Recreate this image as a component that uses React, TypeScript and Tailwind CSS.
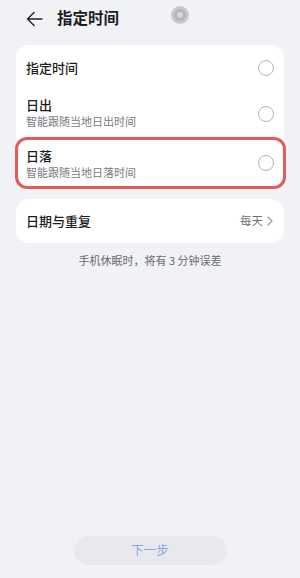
import React from "react";

const font = { fontFamily: '"Noto Sans CJK SC", "Noto Sans", sans-serif' };

function Radio() {
  return <div className="w-4 h-4 rounded-full border-[1.5px] border-[#b4b4b8] shrink-0" />;
}

export default function App() {
  return (
    <div
      className="w-[300px] h-[578px] bg-[#f1f2f6] flex flex-col relative overflow-hidden"
      style={font}
    >
      {/* Header */}
      <div className="h-[36px] flex items-center pl-[26px] shrink-0">
        <svg width="17" height="16" viewBox="0 0 17 16" fill="none" className="mt-[1px]">
          <path d="M16 8H1.5M8 1.5L1.5 8L8 14.5" stroke="#222" strokeWidth="1.4" strokeLinecap="round" strokeLinejoin="round" />
        </svg>
        <span className="ml-[14px] text-[15.5px] font-bold text-[#1c1c1e] leading-none">指定时间</span>
      </div>

      {/* camera cutout */}
      <div className="absolute left-[171px] top-[6px] w-[18px] h-[18px] rounded-full bg-[#c9c9cc] flex items-center justify-center">
        <div className="w-[12px] h-[12px] rounded-full bg-[#b5b5b9] flex items-center justify-center">
          <div className="w-[6px] h-[6px] rounded-full bg-[#d6d6d9]" />
        </div>
      </div>

      {/* Time options */}
      <div className="mx-4 mt-[9px] bg-white rounded-[13px] flex flex-col">
        <div className="h-[45px] flex items-center justify-between pl-[10px] pr-[10px]">
          <span className="text-[13px] font-medium text-[#1c1c1e] leading-[18px]">指定时间</span>
          <Radio />
        </div>
        <div className="h-[47px] flex items-center justify-between pl-[10px] pr-[10px]">
          <div className="flex flex-col mb-[3px]">
            <span className="text-[13px] font-medium text-[#1c1c1e] leading-[18px]">日出</span>
            <span className="text-[11px] text-[#7a7a7e] leading-[15px]">智能跟随当地日出时间</span>
          </div>
          <Radio />
        </div>
        <div className="relative h-[52px] flex items-center justify-between pl-[10px] pr-[10px]">
          <div className="flex flex-col">
            <span className="text-[13px] font-medium text-[#1c1c1e] leading-[18px]">日落</span>
            <span className="text-[11px] text-[#7a7a7e] leading-[15px]">智能跟随当地日落时间</span>
          </div>
          <Radio />
          <div className="absolute -left-[1px] -right-[2px] top-0 bottom-0 border-[3px] border-[#e45b5b] rounded-[12px] pointer-events-none" />
        </div>
      </div>

      {/* Date & repeat */}
      <div className="mx-4 mt-[10px] h-[44px] bg-white rounded-[13px] flex items-center justify-between pl-[10px] pr-[11px]">
        <span className="text-[13px] font-medium text-[#1c1c1e]">日期与重复</span>
        <div className="flex items-center gap-[4px]">
          <span className="text-[11.5px] text-[#6f6f73]">每天</span>
          <svg width="6" height="10" viewBox="0 0 6 10" fill="none">
            <path d="M1 1L5 5L1 9" stroke="#9a9a9e" strokeWidth="1.2" strokeLinecap="round" strokeLinejoin="round" />
          </svg>
        </div>
      </div>

      <p className="mt-[10px] text-center text-[11px] text-[#6a6a6e] leading-[15px]">
        手机休眠时，将有 3 分钟误差
      </p>

      <div className="flex-1" />

      <div className="flex justify-center pb-[13px]">
        <button className="w-[153px] h-[29px] rounded-full bg-[#e8e9ee] text-[12.5px] text-[#88a4dc]">
          下一步
        </button>
      </div>
    </div>
  );
}
